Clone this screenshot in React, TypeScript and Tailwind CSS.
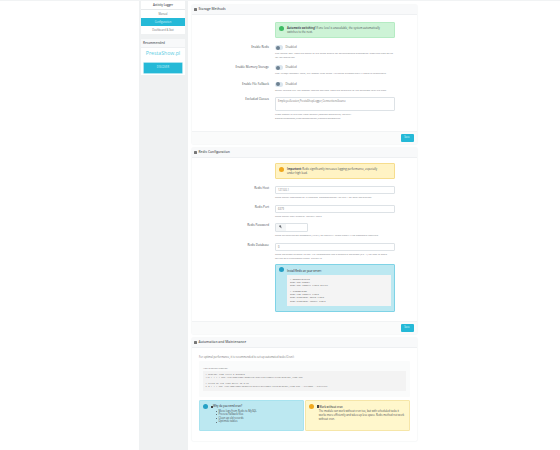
const font = { fontFamily: '"Open Sans", sans-serif' };

function Toggle() {
  return (
    <div className="flex items-center gap-[2.5px]">
      <div className="flex h-[5px] w-[8px] items-center rounded-full bg-[#dbe6ee] pl-[0.5px]">
        <div className="h-[4px] w-[4px] rounded-full bg-[#6d8191]" />
      </div>
      <span className="text-[2.8px] leading-[5px] text-[#666]">Disabled</span>
    </div>
  );
}

function Row({ label, children, mb }: { label: string; children: React.ReactNode; mb: string }) {
  return (
    <div className={`flex ${mb}`}>
      <div className="w-[83px] pr-[6px] text-right text-[3px] leading-[5px] text-[#4a4e55]">{label}</div>
      <div className="w-[120px]">{children}</div>
    </div>
  );
}

function Help({ children }: { children: React.ReactNode }) {
  return <div className="mt-[1px] text-[2.5px] leading-[4px] text-[#7f848a]">{children}</div>;
}

function Input({ value }: { value: string }) {
  return (
    <div className="h-[8px] rounded-[1px] border-[0.5px] border-[#dde2e6] bg-white pl-[2px] text-[2.6px] leading-[7px] text-[#777]">
      {value}
    </div>
  );
}

function Card({ icon, title, children }: { icon: React.ReactNode; title: string; children: React.ReactNode }) {
  return (
    <div className="rounded-[1px] bg-white shadow-[0_0_1.5px_#d8dde0]">
      <div className="flex h-[10px] items-center gap-[2px] border-b-[0.5px] border-[#eef0f2] bg-[#f8f9fa] pl-[2px] text-[3.3px] font-semibold text-[#5a5e64]">
        {icon}
        <span>{title}</span>
      </div>
      {children}
    </div>
  );
}

function Footer() {
  return (
    <div className="flex h-[13px] items-center justify-end border-t-[0.5px] border-[#f1f3f4] bg-[#fafbfb] pr-[3.5px]">
      <div className="flex h-[8px] w-[13px] items-center justify-center rounded-[1px] bg-[#25b9d7] text-[2.6px] text-[#dff6fa]">Save</div>
    </div>
  );
}

const Dot = ({ color }: { color: string }) => (
  <div className="h-[4.5px] w-[4.5px] shrink-0 rounded-full" style={{ background: color }} />
);

const HeadIcon = () => <div className="h-[3px] w-[2.5px] rounded-[0.5px] bg-[#777]" />;

const Li = ({ children }: { children: React.ReactNode }) => (
  <div className="flex items-center gap-[2px] pl-[5px]">
    <span className="h-[1px] w-[1px] rounded-full bg-[#4a4e55]" />
    <span>{children}</span>
  </div>
);

export default function App() {
  return (
    <div className="h-[450px] w-[560px] overflow-hidden bg-white" style={font}>
      <div className="h-[1px] bg-[#f1f3f4]" />
      <div className="ml-[139px] flex h-[449px] w-[281px]">
        <div className="w-[49px] shrink-0 bg-[#eff1f2] px-[2px]">
          <div className="w-[44px] bg-white text-center text-[2.6px] text-[#777]">
            <div className="h-[8px] text-[2.8px] font-semibold leading-[8px] text-[#4a4e55]">Activity Logger</div>
            <div className="border-t-[0.5px] border-[#e6e9eb] leading-[8px]">Manual</div>
            <div className="h-[8px] bg-[#25b9d7] leading-[8px] text-[#d4f2f8]">Configuration</div>
            <div className="leading-[8px]">Dashboard &amp; Stat</div>
          </div>
          <div className="mt-[4.5px] w-[44px] bg-white pb-[1.5px]">
            <div className="h-[9px] border-b-[0.5px] border-[#eef0f2] bg-[#f8f9fa] pl-[2px] text-[3px] font-semibold leading-[9px] text-[#5a5e64]">Recommended</div>
            <div className="mt-[1px] text-center text-[5.2px] leading-[9px] text-[#5ccde3]">PrestaShow.pl</div>
            <div className="mx-[2px] mt-[4px] rounded-[1px] border-[1px] border-[#a8e3ef]">
              <div className="flex h-[10px] items-center justify-center bg-[#25b9d7] text-[2.6px] text-[#d4f2f8]">DISCOVER</div>
            </div>
          </div>
        </div>
        <div className="w-[232px] pl-[4px] pr-[3px] pt-[3.5px]">
          <Card icon={<HeadIcon />} title="Storage Methods">
            <div className="pb-[10.5px] pt-[7px]">
              <div className="mb-[7.5px] flex">
                <div className="w-[83px]" />
                <div className="flex h-[16px] w-[120px] items-start gap-[3.5px] rounded-[1px] border-[0.5px] border-[#b5ebc3] bg-[#cdf3d6] py-0 pl-[3px] pr-[6px] pt-[3.5px] text-[2.7px] leading-[4px] text-[#4a4e55]">
                  <Dot color="#3dbb62" />
                  <span><b>Automatic switching!</b> If one level is unavailable, the system automatically switches to the next.</span>
                </div>
              </div>
              <Row label="Enable Redis" mb="mb-[6px]">
                <Toggle />
                <Help>The fastest way. Logs are saved to the Redis queue for asynchronous processing. Requires cron setup for log migration.</Help>
              </Row>
              <Row label="Enable Memory Storage" mb="mb-[6.5px]">
                <Toggle />
                <Help>Fast MySQL memory table, but slower than Redis. Activated automatically if Redis is unavailable.</Help>
              </Row>
              <Row label="Enable File Fallback" mb="mb-[5.5px]">
                <Toggle />
                <Help>Safest fallback but the slowest logging method. Logs are migrated to the database later via cron.</Help>
              </Row>
              <Row label="Excluded Classes" mb="">
                <div className="h-[14px] rounded-[1px] border-[0.5px] border-[#dde2e6] pl-[2px] text-[2.6px] leading-[7px] text-[#777]">EmployeeSession,PrestaShopLogger,ConnectionsSource</div>
                <Help>Class names to exclude from logging (comma-separated). Default: EmployeeSession,PrestaShopLogger,ConnectionsSource</Help>
              </Row>
            </div>
            <Footer />
          </Card>
          <div className="mt-[4.5px]">
            <Card icon={<HeadIcon />} title="Redis Configuration">
              <div className="pb-[9px] pt-[5px]">
                <div className="mb-[7px] flex">
                  <div className="w-[83px]" />
                  <div className="flex h-[16px] w-[120px] items-start gap-[3.5px] rounded-[1px] border-[0.5px] border-[#f6dd8e] bg-[#fff3c4] pl-[3px] pr-[10px] pt-[3px] text-[2.7px] leading-[4px] text-[#4a4e55]">
                    <Dot color="#f0a81e" />
                    <span><b>Important:</b> Redis significantly increases logging performance, especially under high load.</span>
                  </div>
                </div>
                <Row label="Redis Host" mb="mb-[5.5px]">
                  <Input value="127.0.0.1" />
                  <Help>Redis server hostname or IP address. Recommended 127.0.0.1 for local installation.</Help>
                </Row>
                <Row label="Redis Port" mb="mb-[5px]">
                  <Input value="6379" />
                  <Help>Redis server port number. Default: 6379</Help>
                </Row>
                <Row label="Redis Password" mb="mb-[6px]">
                  <div className="flex h-[9px] w-[33px] rounded-[1px] border-[0.5px] border-[#dde2e6]">
                    <div className="flex w-[10px] items-center justify-center bg-[#f4f6f7] text-[3px] text-[#666]">
                      <svg viewBox="0 0 10 10" className="h-[4px] w-[4px]" fill="#6b6f75">
                        <circle cx="3" cy="3" r="2.6" />
                        <rect x="3" y="3" width="6" height="1.6" transform="rotate(45 3 3)" />
                      </svg>
                    </div>
                  </div>
                  <Help>Redis authentication password (AUTH) for security. Leave empty if no password required.</Help>
                </Row>
                <Row label="Redis Database" mb="mb-[4px]">
                  <Input value="0" />
                  <Help>Redis database number to use. We recommend use a separate database (e.g. 1) for logs to avoid mixing with PrestaShop cache. Default 0.</Help>
                </Row>
                <div className="flex">
                  <div className="w-[83px]" />
                  <div className="flex h-[48px] w-[120px] gap-[3.5px] rounded-[1px] border-[0.5px] border-[#7fd3e6] bg-[#bce8f1] pl-[3px] pr-[3px] pt-[2.5px]">
                    <Dot color="#25a0c5" />
                    <div className="flex-1">
                      <div className="mb-[0.5px] mt-[0.5px] text-[2.6px] font-semibold leading-[7px] text-[#4a4e55]">Install Redis on your server:</div>
                      <pre className="h-[31px] bg-[#f4f4f4] px-[3px] pt-[2.5px] font-['Liberation_Mono'] text-[2.2px] leading-[3.15px] text-[#555]">{`# Ubuntu/Debian
sudo apt update
sudo apt install redis-server

# CentOS/RHEL
sudo yum install redis
sudo systemctl start redis
sudo systemctl enable redis`}</pre>
                    </div>
                  </div>
                </div>
              </div>
              <Footer />
            </Card>
          </div>
          <div className="mt-[4.5px]">
            <Card icon={<HeadIcon />} title="Automation and Maintenance">
              <div className="px-[7px] pb-[10px] pt-[6.5px]">
                <div className="mb-[1.5px] text-[2.6px] leading-[5px] text-[#777]">For optimal performance, it is recommended to set up automated tasks (Cron):</div>
                <div className="mb-[3px] h-[36px] rounded-[1px] bg-[#fafbfb] px-[4px] pt-[4.5px]">
                  <div className="text-[2.4px] leading-[5px] text-[#777]">Add to server crontab:</div>
                  <pre className="mt-[0.5px] h-[20px] bg-[#f3f3f3] px-[2.5px] pt-[1.5px] font-['Liberation_Mono'] text-[2.2px] leading-[3.2px] text-[#666]">{`# Migrate logs every 5 minutes
*/5 * * * * php /var/www/html/modules/activitylogger/cron/migrate_logs.php

# Clean up old logs daily at 2:00
0 2 * * * php /var/www/html/modules/activitylogger/cron/migrate_logs.php --cleanup --failover`}</pre>
                </div>
                <div className="grid grid-cols-2 gap-[1.5px]">
                  <div className="flex h-[31px] gap-[3px] rounded-[1px] border-[0.5px] border-[#a8e3ef] bg-[#bce8f1] p-[3px]">
                    <Dot color="#25a0c5" />
                    <div className="text-[2.6px] leading-[3.6px] text-[#4a4e55]">
                      <div className="mb-[1px] mt-[1px] flex items-center gap-[0.5px] font-semibold">
                        <span className="h-[2.5px] w-[2px] bg-[#444]" />
                        <span>Why do you need cron?</span>
                      </div>
                      <Li>Move logs from Redis to MySQL</Li>
                      <Li>Process fallback files</Li>
                      <Li>Clean up old records</Li>
                      <Li>Optimize tables</Li>
                    </div>
                  </div>
                  <div className="flex h-[31px] gap-[3px] rounded-[1px] border-[0.5px] border-[#f6e6a8] bg-[#fff7cc] p-[3px]">
                    <Dot color="#f0a81e" />
                    <div className="text-[2.6px] leading-[4px] text-[#4a4e55]">
                      <div className="mb-[0.5px] mt-[0.5px] flex items-center gap-[0.5px] font-semibold">
                        <span className="h-[2.5px] w-[2px] bg-[#444]" />
                        <span>Work without cron</span>
                      </div>
                      <div className="ml-[2px]">The module can work without cron too, but with scheduled tasks it works more efficiently and takes up less space. Redis method not work without cron.</div>
                    </div>
                  </div>
                </div>
              </div>
            </Card>
          </div>
        </div>
      </div>
    </div>
  );
}
